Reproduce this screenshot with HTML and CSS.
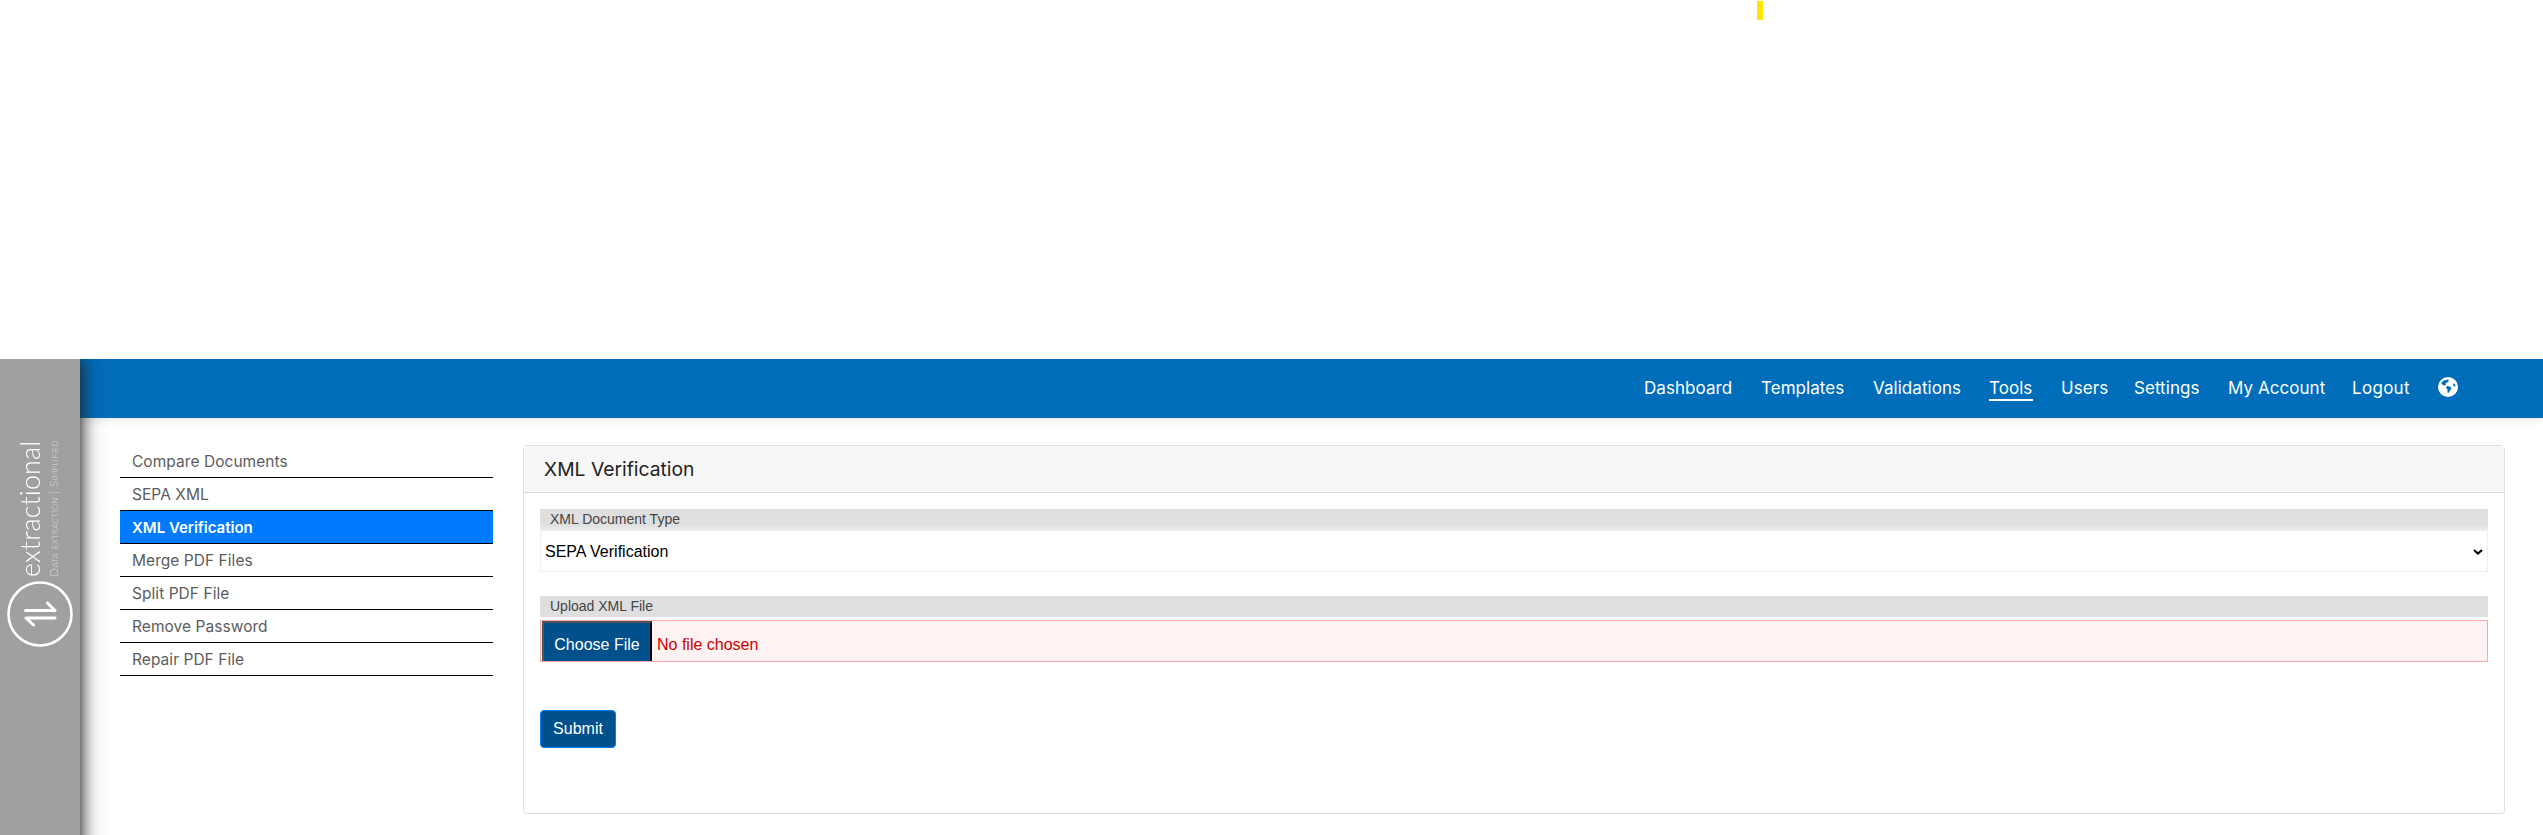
FILE: index.html
```html
<!DOCTYPE html>
<html lang="en">
<head>
<meta charset="utf-8">
<title>XML Verification</title>
<link rel="stylesheet" href="styles.css">
</head>
<body>
<div class="notice"><span class="marker"></span></div>
<div class="app">
  <aside class="sidebar">
    <div class="brand">
      <div class="brand-name">extractional</div>
      <div class="brand-tag">Data extraction | Simplified</div>
    </div>
    <svg class="brand-mark" viewBox="0 0 66 66" fill="none" stroke="#fff" stroke-linecap="round" stroke-linejoin="round">
      <circle cx="33" cy="33" r="31.5" stroke-width="2.6"/>
      <path d="M18.500 29.500H48L40.500 22" stroke-width="3"/>
      <path d="M48 37H19L26.500 44" stroke-width="3"/>
    </svg>
  </aside>
  <div class="main">
    <nav class="topbar">
      <a class="n1">Dashboard</a><a class="n2">Templates</a><a class="n3">Validations</a><a class="n4 current">Tools</a><a class="n5">Users</a><a class="n6">Settings</a><a class="n7">My Account</a><a class="n8">Logout</a>
      <svg class="globe" viewBox="0 0 20 20"><circle cx="10" cy="10" r="10" fill="#fff"/><path d="M3 6L6 3.500 10 2.500 11 4 9 5.500 7.500 6.500 8 8 5.500 8.500ZM9 9L12 9.500 13.500 11.500 12 13.500 10.500 16 9.500 15.500 9.500 12.500 8 11ZM15 6.500L17 7 17.500 9.500 15.500 9Z" fill="#006dbb"/></svg>
    </nav>
    <div class="content">
      <div class="submenu">
        <a>Compare Documents</a><a>SEPA XML</a><a class="selected">XML Verification</a><a>Merge PDF Files</a><a>Split PDF File</a><a>Remove Password</a><a>Repair PDF File</a>
      </div>
      <section class="card">
        <h1 class="card-title"><span>XML Verification</span></h1>
        <form class="card-body">
          <label class="label label-select">XML Document Type</label>
          <div class="select"><span>SEPA Verification</span>
            <svg class="chevron" viewBox="0 0 10 6"><path d="M1 1L5 4.600 9 1" fill="none" stroke="#000" stroke-width="2"/></svg>
          </div>
          <label class="label label-file">Upload XML File</label>
          <div class="file"><span class="choose">Choose File</span><span>No file chosen</span></div>
          <button class="submit" type="button">Submit</button>
        </form>
      </section>
    </div>
  </div>
</div>
</body>
</html>
```
FILE: styles.css
```css
* { box-sizing: border-box; }
body { margin: 0; height: 835px; overflow: hidden; background: #fff; font-family: "Liberation Sans", Arial, sans-serif; font-size: 16px; }
.notice { height: 359px; padding: 1px 0 0 1757px; }
.marker { display: block; width: 6px; height: 19px; background: #ffe600; }
.app { display: flex; height: 476px; overflow: hidden; }
.sidebar { position: relative; width: 80px; flex: none; background: #a0a0a0; padding-top: 80px; display: flex; flex-direction: column; align-items: center; z-index: 2; }
/* Soft shadow cast over the page by the rail */
.sidebar::after { content: ""; position: absolute; left: 80px; top: 0; width: 30px; height: 100%; background: linear-gradient(90deg, rgba(34,34,34,.62), rgba(34,34,34,.38) 5px, rgba(34,34,34,.19) 10px, rgba(34,34,34,.08) 15px, rgba(34,34,34,.03) 20px, rgba(34,34,34,0)); -webkit-mask-image: linear-gradient(rgba(0,0,0,.6), rgba(0,0,0,.85) 8px, #000 20px); mask-image: linear-gradient(rgba(0,0,0,.6), rgba(0,0,0,.85) 8px, #000 20px); }
.brand { width: 66px; height: 138px; flex: none; writing-mode: vertical-rl; transform: rotate(180deg); display: flex; flex-direction: column; padding-right: 5px; color: #fff; font-family: Lato, sans-serif; font-weight: 300; }
.brand-name { font-size: 27px; line-height: 35px; letter-spacing: 0.1px; white-space: nowrap; }
.brand-tag { font-size: 12px; line-height: 14px; letter-spacing: .3px; color: #d8d8d8; font-variant: small-caps; white-space: nowrap; }
.brand-mark { width: 66px; height: 66px; margin-top: 4px; }
.main { flex: 1; }
.topbar { height: 59px; background: #006dbb; box-shadow: 0 2px 8px rgba(0,0,0,.1); padding-left: 1564px; display: flex; color: #fff; font: 17px/25px Inter, sans-serif; padding-top: 17px; letter-spacing: .05px; }
.topbar a { flex: none; white-space: nowrap; height: 25px; }
.n1 { width: 117px; } .n2 { width: 112px; } .n3 { width: 116px; }
.n4 { width: 44px; margin-right: 28px; }
.n5 { width: 73px; } .n6 { width: 94px; } .n7 { width: 124px; } .n8 { width: 86px; }
.topbar .n8 { letter-spacing: .3px; }
.current { border-bottom: 2px solid #fff; }
.globe { width: 20px; height: 20px; margin-top: 1px; }
.content { display: flex; align-items: flex-start; padding: 27px 38px 0 40px; gap: 30px; }
.submenu { width: 373px; flex: none; display: flex; flex-direction: column; }
.submenu a { height: 33px; border-bottom: 1px solid #000; padding-left: 12px; color: #5c5c5c; font: 400 15.5px/34px Inter, sans-serif; letter-spacing: .05px; }
.submenu .selected { background: #007bff; color: #fff; font-weight: 600; font-size: 15px; letter-spacing: 0; }
.card { flex: 1; height: 369px; border: 1px solid #dfdfdf; border-radius: 4px; }
.card-title { margin: 0; height: 47px; background: #f7f7f7; border-bottom: 1px solid #d8d8d8; padding-left: 20px; font: 400 19.3px/47px Inter, sans-serif; color: #222; }
.card-body { padding: 16px; display: flex; flex-direction: column; align-items: stretch; }
.label { padding-left: 10px; font-size: 14px; line-height: 20px; color: #444; background: #dfdfdf; }
.label-select { height: 22px; background: linear-gradient(#dfdfdf 70%, #eee); }
.select { height: 41px; border: 1px solid #eee; border-top: 0; padding: 1px 4px 0; display: flex; align-items: center; justify-content: space-between; color: #000; }
.chevron { width: 10px; height: 6px; }
.label-file { height: 21px; margin-top: 24px; }
.file { height: 42px; margin-top: 3px; border: 1px solid #f9a9a9; background: #fff2f2; color: #c00; display: flex; padding-left: 1px; gap: 5px; line-height: 47px; }
.choose { width: 110px; height: 40px; background: #00508c; color: #fff; border: 2px solid #000; border-top-color: #555; border-left-color: #555; border-bottom: 0; text-align: center; line-height: 43px; }
.submit { margin-top: 48px; width: 76px; height: 38px; border: 1px solid #007bff; border-radius: 4px; background: #00508c; color: #fff; font: 16px "Liberation Sans", Arial, sans-serif; padding: 0; }
```
